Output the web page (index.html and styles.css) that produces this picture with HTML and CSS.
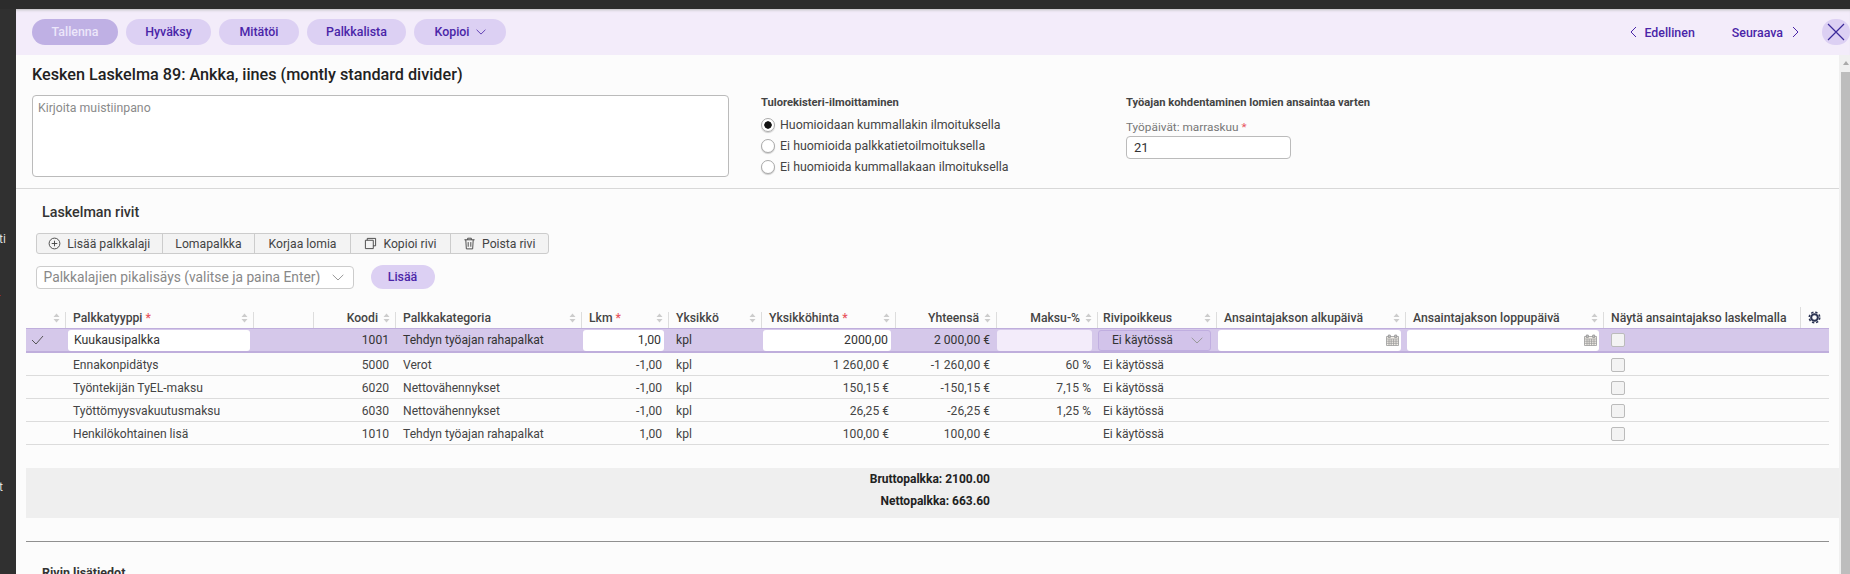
FILE: index.html
```html
<!DOCTYPE html>
<html lang="fi">
<head>
<meta charset="utf-8">
<title>Laskelma 89</title>
<link rel="stylesheet" href="styles.css">
</head>
<body>
<svg class="defs" aria-hidden="true">
  <symbol id="sort" viewBox="0 0 7 10"><path d="M3.5 0.5 6.5 4H.5zM3.5 9.5.5 6h6z"/></symbol>
  <symbol id="chev" viewBox="0 0 12 7"><path d="M.7.8 6 6 11.3.8" fill="none" stroke="currentColor"/></symbol>
  <symbol id="cal" viewBox="0 0 13 12"><path d="M.5 2.5h12v9H.5zM.5 5h12M.5 7.2h12M.5 9.3h12M3 5v6.5M5.2 5v6.5M7.6 5v6.5M10 5v6.5" fill="#f4f0ea" stroke="#9a9a9a" stroke-width=".8"/><path d="M2.3 1v2.6h2V1zM8.7 1v2.6h2V1z" fill="#c9c9c9" stroke="#8a8a8a" stroke-width=".7"/></symbol>
</svg>
<div class="topbar"></div>
<div class="shell">
  <aside class="rail">
    <span class="rail-a">ti</span>
    <span class="rail-dot"></span>
    <span class="rail-b">t</span>
  </aside>
  <div class="panel">
    <header class="toolbar">
      <div class="actions">
        <button class="pill pill-disabled w86">Tallenna</button>
        <button class="pill w85">Hyväksy</button>
        <button class="pill w80">Mitätöi</button>
        <button class="pill w99">Palkkalista</button>
        <button class="pill w92">Kopioi <svg class="chev-s"><use href="#chev"/></svg></button>
      </div>
      <nav class="pager">
        <a class="page-link"><svg class="arrow" viewBox="0 0 7 12"><path d="M6 1 1 6l5 5" fill="none" stroke="currentColor"/></svg>Edellinen</a>
        <a class="page-link">Seuraava<svg class="arrow" viewBox="0 0 7 12"><path d="M1 1l5 5-5 5" fill="none" stroke="currentColor"/></svg></a>
        <button class="close" aria-label="Sulje"><svg viewBox="0 0 20 20"><path d="M2 2l16 16M18 2 2 18" fill="none" stroke="#3b2a9a" stroke-width="1.2"/></svg></button>
      </nav>
    </header>
    <div class="content">
      <main class="main">
        <section class="head">
          <h1 class="title">Kesken Laskelma 89: Ankka, iines (montly standard divider)</h1>
          <div class="form-row">
            <textarea class="note" placeholder="Kirjoita muistiinpano"></textarea>
            <fieldset class="radios">
              <legend class="group-title">Tulorekisteri-ilmoittaminen</legend>
              <label class="radio"><input type="radio" name="t" checked>Huomioidaan kummallakin ilmoituksella</label>
              <label class="radio"><input type="radio" name="t">Ei huomioida palkkatietoilmoituksella</label>
              <label class="radio"><input type="radio" name="t">Ei huomioida kummallakaan ilmoituksella</label>
            </fieldset>
            <div class="worktime">
              <div class="group-title">Työajan kohdentaminen lomien ansaintaa varten</div>
              <label class="field-label">Työpäivät: marraskuu <span class="req">*</span></label>
              <input class="field" value="21">
            </div>
          </div>
        </section>
        <section class="rows">
          <h2 class="section-title">Laskelman rivit</h2>
          <div class="seg">
            <button class="seg-btn s127"><svg class="seg-ic" viewBox="0 0 14 14"><circle cx="7" cy="7" r="5.8" fill="none" stroke="#444"/><path d="M7 4v6M4 7h6" stroke="#444"/></svg>Lisää palkkalaji</button>
            <button class="seg-btn s92">Lomapalkka</button>
            <button class="seg-btn s96">Korjaa lomia</button>
            <button class="seg-btn s100"><svg class="seg-ic" viewBox="0 0 14 14"><path d="M3.5 3.5V1.5h9v8h-2.5" fill="none" stroke="#444"/><path d="M1.5 3.500h8.500v9h-8.500z" fill="none" stroke="#444"/></svg>Kopioi rivi</button>
            <button class="seg-btn s97"><svg class="seg-ic" viewBox="0 0 14 14"><path d="M1.500 3h11M5 3V1.300h4V3M3 3l.6 9.800h6.800L11 3M5.600 5.500v5M8.400 5.500v5" fill="none" stroke="#444"/></svg>Poista rivi</button>
          </div>
          <div class="quick">
            <div class="combo"><span>Palkkalajien pikalisäys (valitse ja paina Enter)</span><svg class="chev-m"><use href="#chev"/></svg></div>
            <button class="pill w64">Lisää</button>
          </div>
          <table class="grid">
            <colgroup>
              <col class="c40"><col class="c188"><col class="c60"><col class="c82"><col class="c186"><col class="c87"><col class="c93"><col class="c134"><col class="c101"><col class="c101"><col class="c119"><col class="c189"><col class="c198"><col class="c196"><col class="c29">
            </colgroup>
            <thead>
              <tr>
                <th><div class="th end"><svg class="sort"><use href="#sort"/></svg></div></th>
                <th><div class="th"><span>Palkkatyyppi <span class="req">*</span></span><svg class="sort"><use href="#sort"/></svg></div></th>
                <th><div class="th"></div></th>
                <th><div class="th end"><span>Koodi</span><svg class="sort"><use href="#sort"/></svg></div></th>
                <th><div class="th"><span>Palkkakategoria</span><svg class="sort"><use href="#sort"/></svg></div></th>
                <th><div class="th"><span>Lkm <span class="req">*</span></span><svg class="sort"><use href="#sort"/></svg></div></th>
                <th><div class="th"><span>Yksikkö</span><svg class="sort"><use href="#sort"/></svg></div></th>
                <th><div class="th"><span>Yksikköhinta <span class="req">*</span></span><svg class="sort"><use href="#sort"/></svg></div></th>
                <th><div class="th end"><span>Yhteensä</span><svg class="sort"><use href="#sort"/></svg></div></th>
                <th><div class="th end"><span>Maksu-%</span><svg class="sort"><use href="#sort"/></svg></div></th>
                <th><div class="th th-tight"><span>Rivipoikkeus</span><svg class="sort"><use href="#sort"/></svg></div></th>
                <th><div class="th"><span>Ansaintajakson alkupäivä</span><svg class="sort"><use href="#sort"/></svg></div></th>
                <th><div class="th"><span>Ansaintajakson loppupäivä</span><svg class="sort"><use href="#sort"/></svg></div></th>
                <th><div class="th th-tall"><span>Näytä ansaintajakso laskelmalla</span></div></th>
                <th class="th-gear"><svg class="gear" viewBox="0 0 14 14"><circle cx="7" cy="7" r="3.600" fill="none" stroke="#2b3352" stroke-width="2.200"/><circle cx="7" cy="7" r="5.700" fill="none" stroke="#2b3352" stroke-width="1.600" stroke-dasharray="2.500 2"/></svg></th>
              </tr>
            </thead>
            <tbody>
              <tr class="sel">
                <td class="ic"><svg class="check" viewBox="0 0 13 10"><path d="M1 5l4 4 7-8" fill="none" stroke="#555"/></svg></td>
                <td class="edit edit-first"><input class="cell" value="Kuukausipalkka"></td>
                <td></td>
                <td class="num">1001</td>
                <td>Tehdyn työajan rahapalkat</td>
                <td class="edit"><input class="cell cell-num" value="1,00"></td>
                <td>kpl</td>
                <td class="edit"><input class="cell cell-num" value="2000,00"></td>
                <td class="num">2 000,00 €</td>
                <td class="edit edit-flush"><input class="cell cell-off"></td>
                <td class="edit edit-flush"><div class="cell-select"><span>Ei käytössä</span><svg class="chev-m"><use href="#chev"/></svg></div></td>
                <td class="edit"><div class="cell-date"><svg class="cal"><use href="#cal"/></svg></div></td>
                <td class="edit"><div class="cell-date"><svg class="cal"><use href="#cal"/></svg></div></td>
                <td><input type="checkbox" class="box"></td>
                <td></td>
              </tr>
              <tr>
                <td></td><td>Ennakonpidätys</td><td></td><td class="num">5000</td><td>Verot</td><td class="num">-1,00</td><td>kpl</td><td class="num">1 260,00 €</td><td class="num">-1 260,00 €</td><td class="num">60 %</td><td class="tight">Ei käytössä</td><td></td><td></td><td><input type="checkbox" class="box"></td><td></td>
              </tr>
              <tr>
                <td></td><td>Työntekijän TyEL-maksu</td><td></td><td class="num">6020</td><td>Nettovähennykset</td><td class="num">-1,00</td><td>kpl</td><td class="num">150,15 €</td><td class="num">-150,15 €</td><td class="num">7,15 %</td><td class="tight">Ei käytössä</td><td></td><td></td><td><input type="checkbox" class="box"></td><td></td>
              </tr>
              <tr>
                <td></td><td>Työttömyysvakuutusmaksu</td><td></td><td class="num">6030</td><td>Nettovähennykset</td><td class="num">-1,00</td><td>kpl</td><td class="num">26,25 €</td><td class="num">-26,25 €</td><td class="num">1,25 %</td><td class="tight">Ei käytössä</td><td></td><td></td><td><input type="checkbox" class="box"></td><td></td>
              </tr>
              <tr>
                <td></td><td>Henkilökohtainen lisä</td><td></td><td class="num">1010</td><td>Tehdyn työajan rahapalkat</td><td class="num">1,00</td><td>kpl</td><td class="num">100,00 €</td><td class="num">100,00 €</td><td></td><td class="tight">Ei käytössä</td><td></td><td></td><td><input type="checkbox" class="box"></td><td></td>
              </tr>
            </tbody>
          </table>
          <div class="totals">
            <div class="total-line">Bruttopalkka: 2100.00</div>
            <div class="total-line">Nettopalkka: 663.60</div>
          </div>
          <hr class="rule">
          <h2 class="section-title details">Rivin lisätiedot</h2>
        </section>
      </main>
      <div class="scrollbar"><span class="scroll-up"></span><span class="scroll-thumb"></span></div>
    </div>
  </div>
</div>
</body>
</html>
```
FILE: styles.css
```css
* { box-sizing: border-box; }
html, body { margin: 0; height: 574px; overflow: hidden; }
body { background: #303030; font-family: "Roboto", "Liberation Sans", sans-serif; color: #444; font-size: 12.1px; }
.defs { display: none; }
.topbar { height: 9px; background: #2c2c2c; }
.shell { display: flex; height: 565px; }
.rail { width: 16px; flex: none; display: flex; flex-direction: column; align-items: flex-start; overflow: hidden; padding-top: 223px; font-size: 12px; line-height: 14px; color: #ddd; }
.rail-a { margin-left: -1px; }
.rail-dot { width: 1px; height: 1px; background: #8a2a2a; margin-top: 49px; }
.rail-b { margin-top: 184px; margin-left: -1px; }
.panel { flex: 1; display: flex; flex-direction: column; min-width: 0; background: #fcfcfc; }

.toolbar { height: 46px; flex: none; display: flex; justify-content: space-between; align-items: center; padding-left: 16px; background: #f3ecfa; box-shadow: inset 0 3px 3px -2px #bbb; }
.actions { display: flex; gap: 8px; }
.pill { height: 26px; border: 0; border-radius: 13px; background: #dcd0f3; color: #4a25a8; font: 500 12.4px/26px "Roboto", sans-serif; padding: 0; display: flex; align-items: center; justify-content: center; gap: 6px; }
.pill-disabled { background: #bfb0e4; color: #ece6fa; }
.w86 { width: 86px; } .w85 { width: 85px; } .w80 { width: 80px; } .w99 { width: 99px; } .w92 { width: 92px; } .w64 { width: 64px; height: 24px; }
.chev-s { width: 10px; height: 6px; color: #4a25a8; }
.pager { display: flex; align-items: center; }
.page-link { display: flex; align-items: center; gap: 7px; color: #4a25a8; font-weight: 500; font-size: 12.4px; margin-right: 37px; }
.page-link + .page-link { gap: 9px; margin-right: 23px; }
.arrow { width: 7px; height: 12px; }
.close { width: 28px; height: 26px; border: 0; padding: 0; background: #dcd0f3; border-radius: 13px; display: flex; align-items: center; justify-content: center; }
.close svg { width: 20px; height: 20px; flex: none; }

.content { flex: 1; display: flex; min-height: 0; }
.main { flex: 1; min-width: 0; overflow: hidden; }
.scrollbar { width: 11px; flex: none; background: #f0f0f0; padding-left: 2px; display: flex; flex-direction: column; align-items: stretch; }
.scroll-up { height: 17px; display: block; }
.scroll-up::before { content: ""; display: block; margin: 6px auto 0; width: 0; border: 3.5px solid transparent; border-bottom: 4px solid #aaa; border-top: 0; }
.scroll-thumb { flex: 1; background: #bdbdbd; }

.head { height: 134px; padding: 10px 0 0 16px; border-bottom: 1px solid #d8d8d8; }
.title { margin: 0; font: 500 16.2px/20px "Roboto", sans-serif; color: #222; }
.form-row { display: flex; margin-top: 10px; }
.note { width: 697px; height: 82px; padding: 5px 5px; border: 1px solid #bbb; border-radius: 4px; background: #fff; font: 12.3px "Roboto", sans-serif; resize: none; }
.note::placeholder { color: #8a8a8a; }
.radios { width: 365px; margin: 0 0 0 32px; padding: 0; border: 0; min-width: 0; }
.group-title { padding: 0; font: 700 11.2px/16px "Roboto", sans-serif; color: #444; }
.radios .group-title { margin-bottom: 3px; height: 16px; }
.radio { display: flex; align-items: center; height: 21px; font-size: 12.4px; color: #444; }
.radio input { appearance: none; width: 14px; height: 14px; margin: 0 5px 0 0; border: 1px solid #aaa; border-radius: 50%; background: #fff; box-shadow: 0 1px 1px #ccc; }
.radio input:checked { background: radial-gradient(circle, #111 3.4px, #fff 4px); }
.field-label { display: block; margin-top: 8px; font-size: 11.8px; line-height: 16px; color: #777; }
.req { color: #e8555f; }
.field { display: block; width: 165px; height: 23px; margin-top: 1px; padding: 0 7px; border: 1px solid #bbb; border-radius: 4px; background: #fff; font: 13px "Roboto", sans-serif; color: #333; }

.section-title { margin: 0; font: 500 14.3px/20px "Roboto", sans-serif; color: #333; }
.rows { padding: 13px 0 0 10px; }
.rows > .section-title { padding-left: 16px; }
.seg { display: flex; width: 513px; height: 21px; margin: 11px 0 0 9.5px; border: 1px solid #ccc; border-radius: 3px; background: #f3f3f3; }
.seg-btn { display: flex; align-items: center; justify-content: center; gap: 6px; border: 0; border-right: 1px solid #ccc; background: none; padding: 0; font: 12.2px "Roboto", sans-serif; color: #444; }
.seg-btn:last-child { border-right: 0; }
.s127 { width: 126.5px; } .s92 { width: 92px; } .s96 { width: 96px; } .s100 { width: 100px; } .s97 { flex: 1; }
.seg-ic { width: 13px; height: 13px; }
.quick { display: flex; align-items: center; gap: 17px; margin: 11px 0 0 9.5px; height: 24px; }
.combo { width: 318px; height: 23px; display: flex; align-items: center; justify-content: space-between; padding: 0 9px 0 7px; border: 1px solid #ccc; border-radius: 4px; background: #fff; color: #888; font-size: 13.8px; white-space: nowrap; }
.chev-m { width: 12px; height: 7px; color: #999; flex: none; }

.grid { width: 1803px; table-layout: fixed; border-collapse: separate; border-spacing: 0; margin-top: 18px; }
.c40 { width: 40px; } .c188 { width: 188px; } .c60 { width: 60px; } .c82 { width: 82px; } .c186 { width: 186px; } .c87 { width: 87px; } .c93 { width: 93px; } .c134 { width: 134px; } .c101 { width: 101px; } .c119 { width: 119px; } .c189 { width: 189px; } .c198 { width: 198px; } .c196 { width: 196px; } .c29 { width: 29px; }
.grid th { height: 21px; padding: 0; vertical-align: bottom; font-weight: 500; text-align: left; color: #444; font-size: 12.2px; }
.th { height: 16px; display: flex; justify-content: space-between; align-items: flex-start; padding: 0 5px 0 7px; border-right: 1px solid #ddd; line-height: 12px; white-space: nowrap; }
.th.end { justify-content: flex-end; gap: 5px; }
.th-tight { padding-left: 5px; }
.th-tall { border-right: 0; }
.sort { width: 7px; height: 10px; fill: #ccc; margin-top: 1px; flex: none; }
.grid .th-gear { border-left: 1px solid #ddd; vertical-align: middle; padding: 0 0 1px 7px; }
.gear { width: 13px; height: 13px; display: block; }
.grid td { height: 23px; padding: 1px 7px 0; border-bottom: 1px solid #dcdcdc; color: #444; font-size: 12.1px; white-space: nowrap; overflow: hidden; line-height: 14px; }
.grid td.num { text-align: right; }
.grid td.tight { padding-left: 5px; }
.grid td.ic { padding: 0 0 0 5px; }
.check { width: 13px; height: 10px; display: block; }
.grid .sel td { height: 25px; padding-top: 0; background: #d5c8ea; border-top: 1px solid #bfaedc; border-bottom: 2px solid #bfaedc; color: #333; }
.grid .sel td.edit { padding: 0 5px 0 1px; }
.grid .sel td.edit-first { padding: 0 4px 0 2px; }
.grid .sel td.edit-flush { padding: 0 6px 0 0; }
.cell { display: block; width: 100%; height: 21px; padding: 0 6px; border: 0; border-radius: 3px; background: #fff; font: 12.3px "Roboto", sans-serif; color: #333; }
.cell-num { text-align: right; padding-right: 3px; }
.cell-off { background: #f3ecfa; }
.cell-select { height: 21px; display: flex; align-items: center; justify-content: space-between; padding: 0 7px 0 13px; border: 1px solid #c0aee0; border-radius: 3px; background: #d2c3ea; }
.cell-date { height: 21px; display: flex; align-items: center; justify-content: flex-end; padding-right: 2px; border-radius: 3px; background: #fff; }
.cal { width: 13px; height: 12px; }
.box { appearance: none; display: block; width: 14px; height: 14px; margin: 0; border: 1px solid #bbb; border-radius: 2px; background: #f3f3f3; }
.totals { height: 50px; margin-top: 23px; background: #efefef; }
.total-line { width: 964px; height: 22px; line-height: 22px; text-align: right; font-weight: 700; font-size: 12px; color: #222; }
.rule { height: 1px; margin: 23px 0 0; border: 0; background: #909090; width: 1803px; }
.details { padding-top: 21px; font-size: 12.5px; font-weight: 700; }
```
